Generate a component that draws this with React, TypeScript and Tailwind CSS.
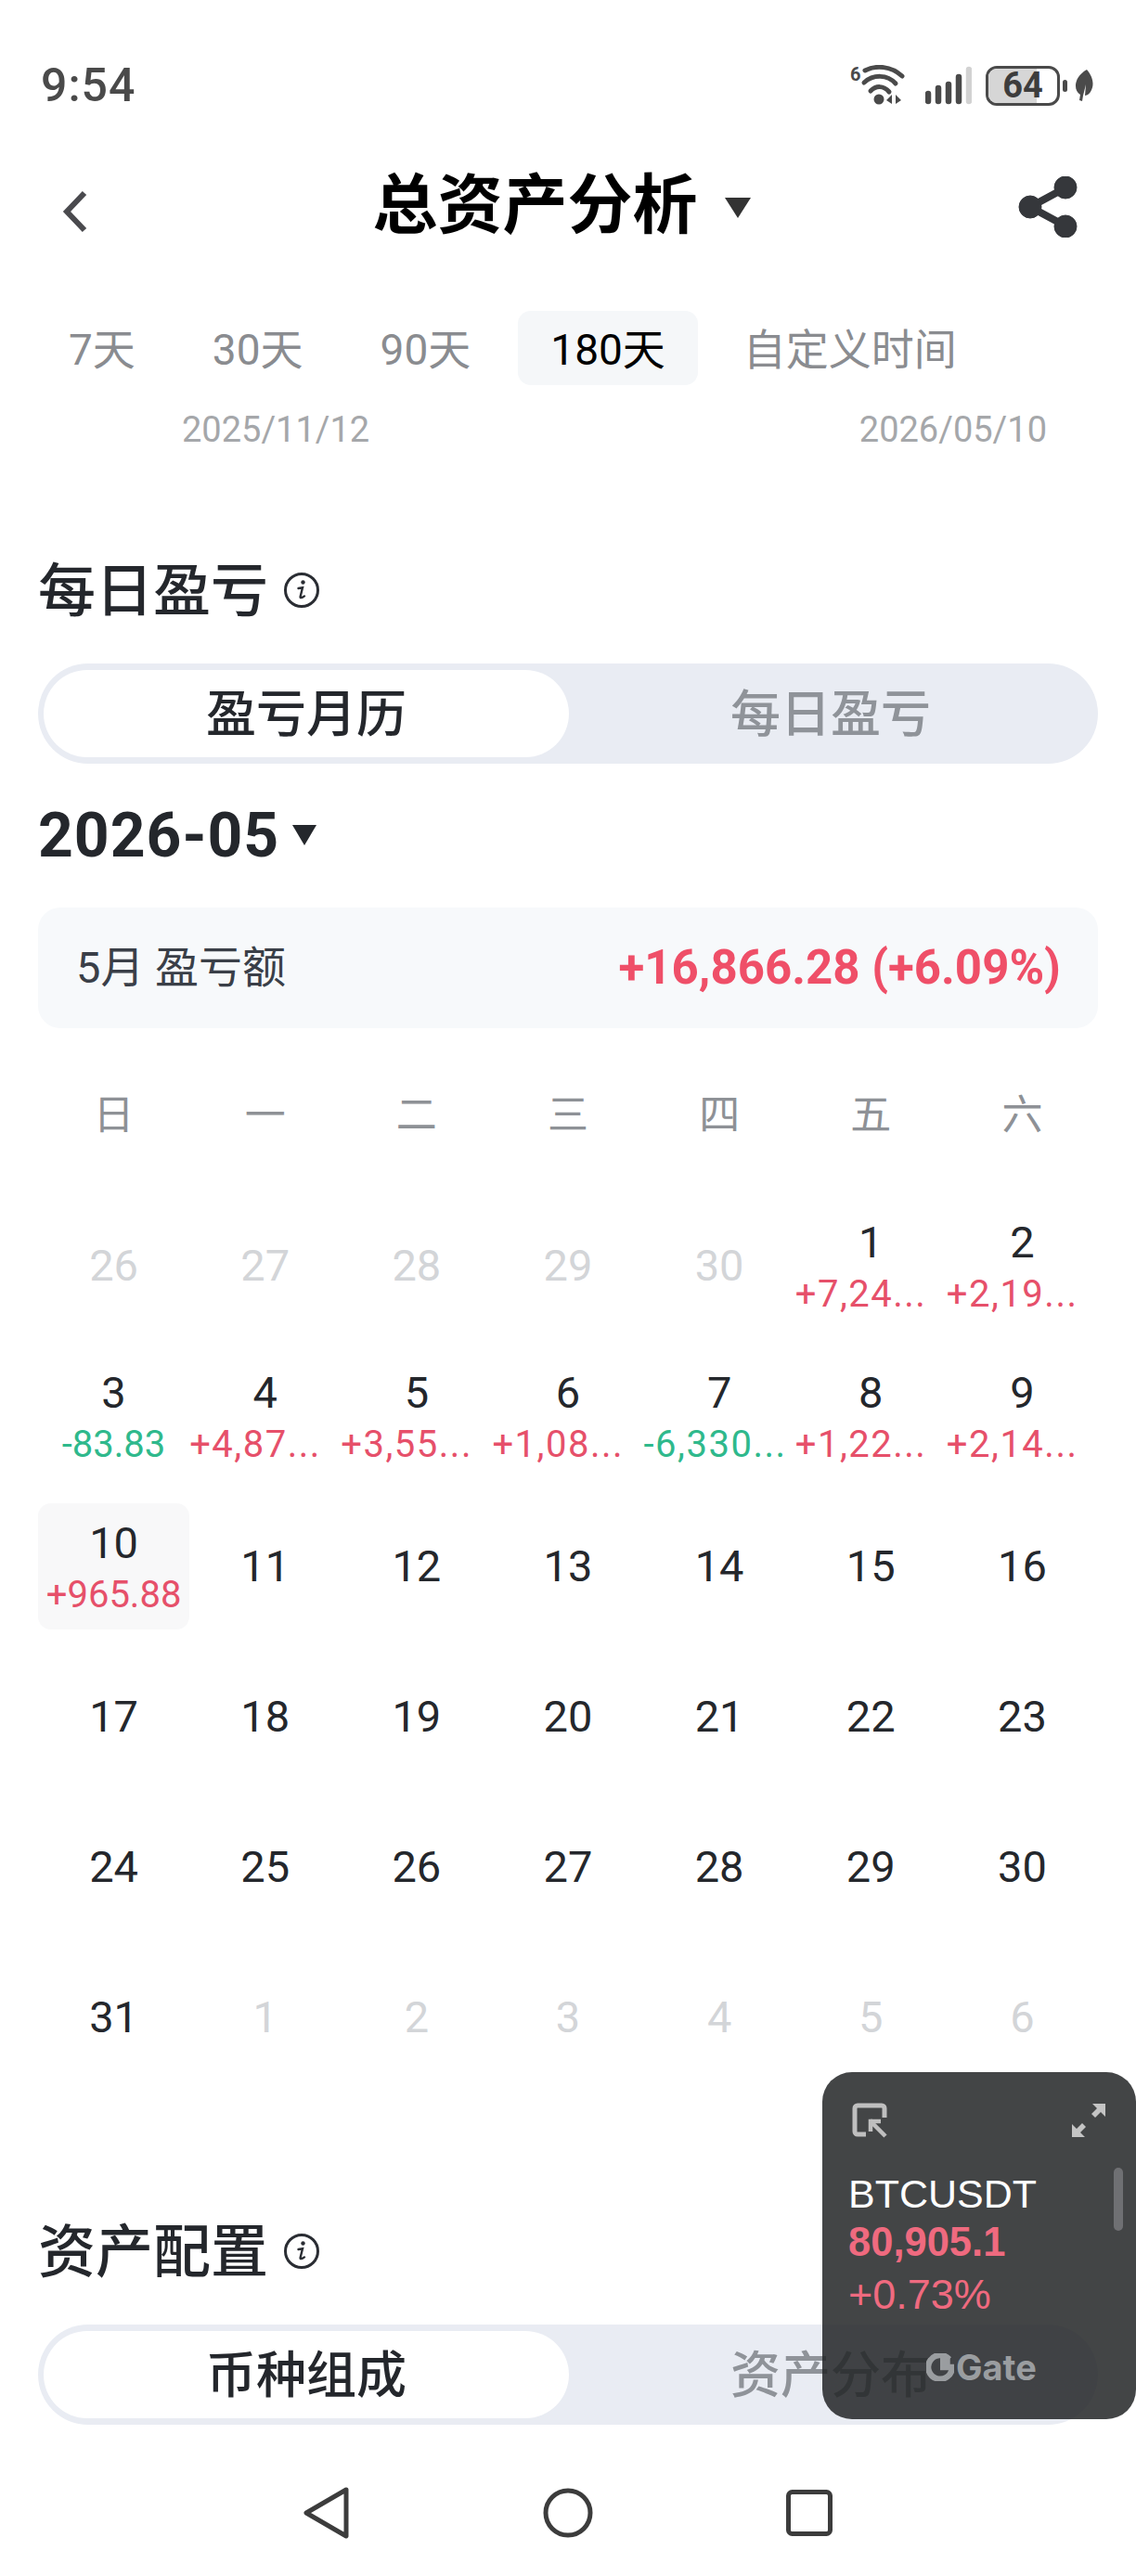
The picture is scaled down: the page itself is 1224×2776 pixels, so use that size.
import * as React from "react";

const SANS = "font-['Roboto','Noto_Sans_CJK_SC',sans-serif]";

type Day = { d: number; amount?: string; down?: boolean; muted?: boolean; today?: boolean; cut?: boolean };

const DAYS: Day[] = [
  { d: 26, muted: true }, { d: 27, muted: true }, { d: 28, muted: true }, { d: 29, muted: true }, { d: 30, muted: true },
  { d: 1, amount: "+7,24...", cut: true }, { d: 2, amount: "+2,19...", cut: true },
  { d: 3, amount: "-83.83", down: true }, { d: 4, amount: "+4,87...", cut: true }, { d: 5, amount: "+3,55...", cut: true }, { d: 6, amount: "+1,08...", cut: true },
  { d: 7, amount: "-6,330...", down: true, cut: true }, { d: 8, amount: "+1,22...", cut: true }, { d: 9, amount: "+2,14...", cut: true },
  { d: 10, amount: "+965.88", today: true }, { d: 11 }, { d: 12 }, { d: 13 }, { d: 14 }, { d: 15 }, { d: 16 },
  { d: 17 }, { d: 18 }, { d: 19 }, { d: 20 }, { d: 21 }, { d: 22 }, { d: 23 },
  { d: 24 }, { d: 25 }, { d: 26 }, { d: 27 }, { d: 28 }, { d: 29 }, { d: 30 },
  { d: 31 }, { d: 1, muted: true }, { d: 2, muted: true }, { d: 3, muted: true }, { d: 4, muted: true }, { d: 5, muted: true }, { d: 6, muted: true },
];

function StatusIcons() {
  return (
    <div className="flex items-center">
      <div className="relative h-[44px] w-[60px]">
        <span className="absolute left-0 top-0 text-[20px] font-bold leading-[20px] text-[#4a4a4a]">6</span>
        <svg width="60" height="44" viewBox="0 0 60 44" className="text-[#4a4a4a]" fill="none" stroke="currentColor" strokeLinecap="round">
          <path d="M16 6 C28 0 44 1 56 12" strokeWidth="5" />
          <path d="M15 19 C25 10 40 10 49 20" strokeWidth="5" />
          <path d="M22 28 C28 22 36 22 42 29" strokeWidth="5" />
          <circle cx="31" cy="37" r="5.5" fill="currentColor" stroke="none" />
          <path d="M45 32 L45 42 L39 38 Z M49 32 L49 42 L55 38 Z" fill="currentColor" stroke="none" />
        </svg>
      </div>
      <svg width="50" height="42" viewBox="0 0 50 42" className="ml-[21px]" stroke="#4a4a4a" strokeWidth="6.5" strokeLinecap="round">
        <path d="M3 30V38M14 24V38M25 20V38M36 12V38" />
        <path d="M47 4V38" stroke="#d2d2d2" />
      </svg>
      <div className="relative ml-[15px] h-[43px] w-[80px] overflow-hidden rounded-[12px] border-[3px] border-[#4a4a4a]">
        <div className="h-full w-[52px] bg-[#d6d6d6]" />
        <span className="absolute inset-0 flex items-center justify-center text-[38px] font-bold leading-none text-[#3d3d3d] font-['Roboto',sans-serif]">64</span>
      </div>
      <div className="ml-[3px] h-[13px] w-[5px] rounded-full bg-[#4a4a4a]" />
      <svg width="20" height="34" viewBox="0 0 20 34" className="ml-[8px]">
        <path d="M13 0 C19 7 22 16 17 24 C15 27 12 28 11 28 L12 16 L9 28 L8 34 L5 33 L6 27 C-2 22 -1 8 13 0 Z" fill="#4a4a4a" />
      </svg>
    </div>
  );
}

function InfoIcon() {
  return (
    <svg width="40" height="40" viewBox="0 0 40 40" fill="none" stroke="#2a2d33" className="ml-[16px]">
      <circle cx="20" cy="20" r="17.5" strokeWidth="3" />
      <circle cx="21.5" cy="11.5" r="2.2" fill="#2a2d33" stroke="none" />
      <path d="M16.5 18 L21 17.2 L18.6 27 C18.3 28.6 20 28.6 23 26.4" strokeWidth="2.4" strokeLinecap="round" />
    </svg>
  );
}

function Segment({ left, right }: { left: string; right: string }) {
  return (
    <div className="mx-[41px] flex h-[108px] items-center rounded-full bg-[#e9ecf3] p-[6px]">
      <div className="flex h-[94px] w-[566px] items-center justify-center rounded-full bg-white pt-[3px] text-[54px] font-medium text-[#24272c]">
        {left}
      </div>
      <div className="flex-1 pt-[3px] text-center text-[54px] font-medium text-[#8f9399]">{right}</div>
    </div>
  );
}

function DayCell({ day }: { day: Day }) {
  const num = day.muted ? "text-[#d3d5d8]" : "text-[#24272c]";
  return (
    <div className="flex h-[162px] items-center justify-center">
      <div className={`flex h-[136px] w-full flex-col items-center justify-center rounded-[14px] ${day.today ? "bg-[#f8f8f9]" : ""} ${day.amount ? "pt-[5px]" : ""}`}>
        <div className={`text-[47px] leading-[56px] ${num}`}>{day.d}</div>
        {day.amount && (
          <div className={`whitespace-nowrap text-[40px] leading-[56px] ${day.down ? "text-[#2fb98c]" : "text-[#e6506a]"} ${day.cut ? "self-start tracking-[1.5px]" : ""}`}>
            {day.amount}
          </div>
        )}
      </div>
    </div>
  );
}

function FloatTicker() {
  return (
    <div className="absolute right-0 top-[2233px] h-[374px] w-[338px] rounded-[32px] bg-[#222426]/85 font-['Liberation_Sans',sans-serif]">
      <svg width="38" height="38" viewBox="0 0 38 38" className="absolute left-[32px] top-[33px]" fill="none" stroke="#bfbfbf" strokeWidth="5">
        <path d="M15 34H6a3 3 0 0 1-3-3V6a3 3 0 0 1 3-3h26a3 3 0 0 1 3 3v10" />
        <path d="M22 20h-2v11M21 21 36 36" strokeWidth="4.5" />
        <path d="M20 20H31" strokeWidth="4.5" />
      </svg>
      <svg width="38" height="38" viewBox="0 0 38 38" className="absolute left-[268px] top-[33px]" fill="#c4c4c4">
        <path d="M23 1H37V15L32 10L26 16 L22 12 L28 6Z" />
        <path d="M15 37H1V23L6 28L12 22 L16 26 L10 32Z" />
      </svg>
      <div className="absolute left-[28px] top-[104px] text-[43px] leading-[54px] text-white">BTCUSDT</div>
      <div className="absolute left-[28px] top-[156px] text-[43.5px] font-bold leading-[54px] text-[#ef6a7f]">80,905.1</div>
      <div className="absolute left-[28px] top-[213px] text-[45px] leading-[54px] text-[#ef6a7f]">+0.73%</div>
      <div className="absolute left-[314px] top-[103px] h-[68px] w-[10px] rounded-full bg-[#6f7073]" />
      <div className="absolute left-[112px] top-[299px] flex items-center font-['Inter',sans-serif]">
        <svg width="30" height="30" viewBox="0 0 28 28" fill="none">
          <path d="M23 6A12 12 0 1 0 26 14H14" stroke="#9a9da0" strokeWidth="6" />
          <rect x="14" y="3" width="10" height="10" fill="#9a9da0" />
        </svg>
        <span className="ml-[2px] text-[38px] font-bold leading-none text-[#9a9da0]">Gate</span>
      </div>
    </div>
  );
}

export default function App() {
  return (
    <div className={`relative flex h-[2776px] w-[1224px] flex-col overflow-hidden bg-white ${SANS}`}>
      <div className="mt-[52px] flex h-[80px] items-center justify-between pl-[44px] pr-[46px]">
        <span className="text-[50px] font-medium tracking-[1px] text-[#4a4a4a]">9:54</span>
        <StatusIcons />
      </div>

      <div className="relative flex h-[180px] items-center justify-center pr-[14px]">
        <svg width="30" height="46" viewBox="0 0 30 46" fill="none" className="absolute left-[66px] top-[73px]" stroke="#4a4a4e" strokeWidth="6">
          <path d="M25 3 6 23l19 20" />
        </svg>
        <span className="text-[70px] font-bold text-black">总资产分析</span>
        <svg width="28" height="22" viewBox="0 0 28 22" className="ml-[29px] mt-[4px]"><path d="M0 0h28L14 22Z" fill="#333" /></svg>
        <svg width="64" height="66" viewBox="0 0 64 66" className="absolute left-[1097px] top-[58px]" fill="#35373b" stroke="#35373b">
          <path d="M50 13 13 33l37 20" fill="none" strokeWidth="8" />
          <circle cx="51" cy="12" r="12" /><circle cx="13" cy="33" r="12" /><circle cx="51" cy="54" r="12" />
        </svg>
      </div>

      <div className="ml-[39px] mt-[23px] flex h-[80px] items-center gap-[13px] text-[46px] text-[#8a8c90]">
        <span className="px-[35px] pt-[4px]">7天</span>
        <span className="px-[35px] pt-[4px]">30天</span>
        <span className="mr-[3px] px-[35px] pt-[4px]">90天</span>
        <span className="flex h-[80px] items-center rounded-[14px] bg-[#f5f7f9] px-[35px] pt-[4px] text-black">180天</span>
        <span className="ml-[1px] px-[35px] pt-[4px]">自定义时间</span>
      </div>
      <div className="flex h-[94px] items-center justify-between pl-[196px] pr-[96px] pt-[2px] text-[38px] text-[#a5a7aa]">
        <span>2025/11/12</span>
        <span>2026/05/10</span>
      </div>

      <div className="ml-[41px] mt-[77px] flex h-[100px] items-center">
        <span className="pt-[2px] text-[62px] font-medium text-[#24272c]">每日盈亏</span>
        <InfoIcon />
      </div>
      <div className="mt-[29px]"><Segment left="盈亏月历" right="每日盈亏" /></div>

      <div className="ml-[41px] flex h-[154px] items-center">
        <span className="text-[66px] font-bold tracking-[1px] text-[#24272c]">2026-05</span>
        <svg width="26" height="22" viewBox="0 0 26 22" className="ml-[14px]"><path d="M0 0h26L13 22Z" fill="#24272c" /></svg>
      </div>

      <div className="mx-[41px] mt-[1px] flex h-[130px] items-center justify-between rounded-[24px] bg-[#f7f9fb] pl-[41px] pr-[40px]">
        <span className="text-[47px] text-[#3a3f48]">5月 盈亏额</span>
        <span className="text-[51px] font-bold text-[#ef4f68]">+16,866.28 (+6.09%)</span>
      </div>

      <div className="mx-[41px] mt-[44px] grid h-[100px] grid-cols-7 items-center text-center text-[44px] text-[#8e9196]">
        {["日", "一", "二", "三", "四", "五", "六"].map((w) => (
          <span key={w}>{w}</span>
        ))}
      </div>

      <div className="mx-[41px] mt-[31px] grid grid-cols-7">
        {DAYS.map((day, i) => (
          <DayCell key={i} day={day} />
        ))}
      </div>

      <div className="ml-[41px] mt-[121px] flex h-[100px] items-center">
        <span className="pt-[2px] text-[62px] font-medium text-[#24272c]">资产配置</span>
        <InfoIcon />
      </div>
      <div className="mt-[29px]"><Segment left="币种组成" right="资产分布" /></div>

      <div className="mt-[67px] flex items-center justify-center gap-[208px]">
        <svg width="50" height="56" viewBox="0 0 50 56" fill="none" stroke="#3c3c3c" strokeWidth="5" strokeLinejoin="round">
          <path d="M46 3 3 28l43 25Z" />
        </svg>
        <svg width="54" height="54" viewBox="0 0 54 54" fill="none" stroke="#3c3c3c" strokeWidth="5"><circle cx="27" cy="27" r="24" /></svg>
        <svg width="50" height="50" viewBox="0 0 50 50" fill="none" stroke="#3c3c3c" strokeWidth="5"><rect x="2.5" y="2.5" width="45" height="45" rx="4" /></svg>
      </div>

      <FloatTicker />
    </div>
  );
}
